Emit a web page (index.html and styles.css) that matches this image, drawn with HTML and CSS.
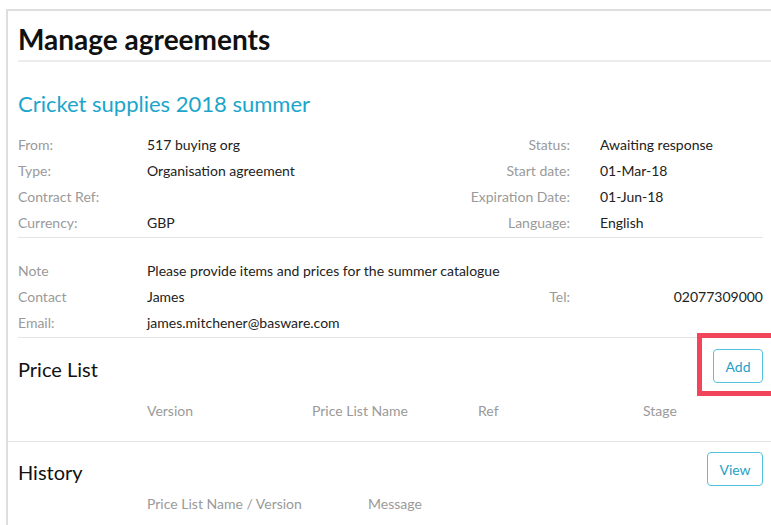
FILE: index.html
```html
<!DOCTYPE html>
<html lang="en">
<head>
<meta charset="utf-8">
<title>Manage agreements</title>
<link rel="stylesheet" href="styles.css">
</head>
<body>
<div class="card">
  <h1 class="page-title">Manage agreements</h1>

  <h2 class="agreement-name">Cricket supplies 2018 summer</h2>

  <div class="details">
    <span class="lbl">From:</span><span class="val">517 buying org</span>
    <span class="lbl lbl-right">Status:</span><span class="val">Awaiting response</span>

    <span class="lbl">Type:</span><span class="val">Organisation agreement</span>
    <span class="lbl lbl-right">Start date:</span><span class="val">01-Mar-18</span>

    <span class="lbl">Contract Ref:</span><span class="val"></span>
    <span class="lbl lbl-right">Expiration Date:</span><span class="val">01-Jun-18</span>

    <span class="lbl">Currency:</span><span class="val">GBP</span>
    <span class="lbl lbl-right">Language:</span><span class="val">English</span>
  </div>

  <div class="details contact">
    <span class="lbl">Note</span><span class="val span-3">Please provide items and prices for the summer catalogue</span>

    <span class="lbl">Contact</span><span class="val">James</span>
    <span class="lbl lbl-right">Tel:</span><span class="val val-end">02077309000</span>

    <span class="lbl">Email:</span><span class="val span-3">james.mitchener@basware.com</span>
  </div>

  <section class="block price-list">
    <div class="block-head">
      <h3 class="block-title">Price List</h3>
      <button class="btn btn-add" type="button">Add</button>
      <span class="highlight"></span>
    </div>
    <div class="cols cols-price">
      <span></span>
      <span>Version</span>
      <span>Price List Name</span>
      <span>Ref</span>
      <span>Stage</span>
    </div>
  </section>

  <section class="block history">
    <div class="block-head">
      <h3 class="block-title">History</h3>
      <button class="btn btn-view" type="button">View</button>
    </div>
    <div class="cols cols-history">
      <span></span>
      <span>Price List Name / Version</span>
      <span>Message</span>
    </div>
  </section>
</div>
</body>
</html>
```

FILE: styles.css
```css
html, body {
  margin: 0;
  padding: 0;
  background: #fff;
  overflow: hidden;
}

body {
  font-family: Lato, "Open Sans", Arial, sans-serif;
  font-size: 14px;
  color: #222;
}

.card {
  margin: 9px 0 0 6px;
  border-top: 2px solid #dedede;
  border-left: 2px solid #dedede;
  padding: 0 8px 8px 10px;
}

.page-title {
  margin: 0 -8px 0 0;
  padding: 11px 0 4px;
  font-size: 28px;
  line-height: 34px;
  font-weight: 700;
  color: #111;
  border-bottom: 2px solid #ececec;
}

.agreement-name {
  margin: 28px 0 0;
  font-size: 22px;
  line-height: 28px;
  font-weight: 400;
  color: #1ca5cb;
}

.details {
  display: grid;
  grid-template-columns: 129px 258px 195px 163px;
  margin-top: 14px;
  line-height: 26px;
  border-bottom: 1px solid #e4e4e4;
  padding-bottom: 1px;
}

.details.contact {
  margin-top: 20px;
  margin-right: -8px;
  padding-bottom: 1px;
}

.lbl {
  color: #9a9a9a;
  white-space: nowrap;
}

.lbl-right {
  text-align: right;
  padding-right: 30px;
}

.val {
  color: #222;
  white-space: nowrap;
}

.val-end {
  text-align: right;
}

.span-3 {
  grid-column: span 3;
}

.block {
  margin-right: -8px;
  padding-right: 8px;
}

.block-head {
  position: relative;
  display: flex;
  justify-content: space-between;
  align-items: flex-start;
}

.block-title {
  margin: 0;
  font-size: 20px;
  line-height: 28px;
  font-weight: 400;
  color: #111;
}

.btn {
  font-family: inherit;
  font-size: 14px;
  color: #1f9fc7;
  background: #fff;
  border: 1px solid #55c2df;
  border-radius: 4px;
  height: 34px;
  padding: 0;
  cursor: pointer;
}

.price-list {
  border-bottom: 1px solid #e4e4e4;
  margin-left: -10px;
  padding-left: 10px;
}

.price-list .block-head {
  padding-top: 11px;
}

.price-list .block-title {
  margin-top: 6px;
}

.btn-add {
  width: 50px;
}

.btn-view {
  width: 56px;
}

/* callout frame around the Add action */
.highlight {
  position: absolute;
  left: 679px;
  top: -5px;
  width: 80px;
  height: 53px;
  border: 5px solid #f2445b;
}

.cols {
  display: grid;
  line-height: 26px;
  color: #9a9a9a;
  white-space: nowrap;
}

.cols-price {
  grid-template-columns: 129px 165px 166px 165px 165px;
  margin-top: 15px;
  padding-bottom: 17px;
}

.history .block-head {
  padding-top: 10px;
}

.history .block-title {
  margin-top: 6px;
}

.cols-history {
  grid-template-columns: 129px 221px 200px;
  margin-top: 5px;
}
```
